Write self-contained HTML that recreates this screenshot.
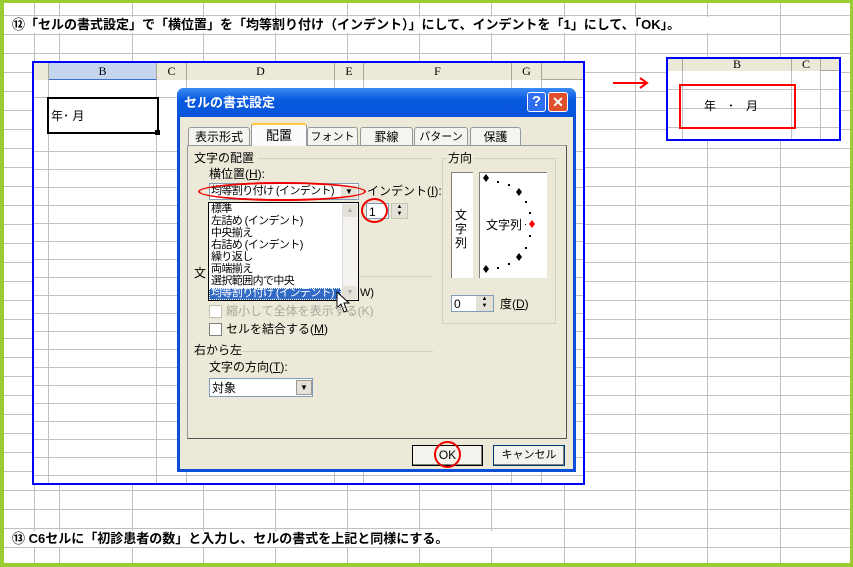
<!DOCTYPE html>
<html><head><meta charset="utf-8"><style>
*{margin:0;padding:0;box-sizing:border-box}
body{width:853px;height:567px;overflow:hidden;background:#fff;font-family:"Liberation Sans","Noto Sans CJK JP",sans-serif;position:relative}
.a{position:absolute}
.t{font-size:12px;line-height:14px;color:#000;white-space:nowrap}
.hdr{background:#ece9d8;border-right:1px solid #aca899;font-size:12px;text-align:center;line-height:17px;font-family:"Liberation Serif","Noto Sans CJK JP",serif}
.tab{background:#f5f4ee;border:1px solid #919b9c;border-bottom:none;font-size:12px;text-align:center;line-height:18px;border-radius:3px 3px 0 0}
.sunk{background:#fff;border:1px solid #7f9db9}
.btn{background:#f3f2ec;border:1px solid #000;box-shadow:inset -1px -1px #808080;font-size:12px;text-align:center;line-height:18px}
.cb{width:13px;height:13px;border:1px solid #808080;background:#fff}
.n{font-size:11px;letter-spacing:-0.6px}
</style></head><body>
<svg class="a" style="left:0;top:0" width="853" height="567">
<g stroke="#c0c0c0" stroke-width="1">
<line x1="34.5" y1="0" x2="34.5" y2="567"/><line x1="59.5" y1="0" x2="59.5" y2="567"/>
<line x1="132.5" y1="0" x2="132.5" y2="567"/><line x1="203.5" y1="0" x2="203.5" y2="567"/>
<line x1="275.5" y1="0" x2="275.5" y2="567"/><line x1="347.5" y1="0" x2="347.5" y2="567"/>
<line x1="419.5" y1="0" x2="419.5" y2="567"/><line x1="491.5" y1="0" x2="491.5" y2="567"/>
<line x1="564.5" y1="0" x2="564.5" y2="567"/><line x1="635.5" y1="0" x2="635.5" y2="567"/>
<line x1="707.5" y1="0" x2="707.5" y2="567"/><line x1="780.5" y1="0" x2="780.5" y2="567"/>
<line x1="0" y1="15.5" x2="853" y2="15.5"/><line x1="0" y1="34.5" x2="853" y2="34.5"/>
<line x1="0" y1="53.5" x2="853" y2="53.5"/><line x1="0" y1="72.5" x2="853" y2="72.5"/>
<line x1="0" y1="91.5" x2="853" y2="91.5"/><line x1="0" y1="110.5" x2="853" y2="110.5"/>
<line x1="0" y1="129.5" x2="853" y2="129.5"/><line x1="0" y1="148.5" x2="853" y2="148.5"/>
<line x1="0" y1="167.5" x2="853" y2="167.5"/><line x1="0" y1="186.5" x2="853" y2="186.5"/>
<line x1="0" y1="205.5" x2="853" y2="205.5"/><line x1="0" y1="224.5" x2="853" y2="224.5"/>
<line x1="0" y1="243.5" x2="853" y2="243.5"/><line x1="0" y1="262.5" x2="853" y2="262.5"/>
<line x1="0" y1="281.5" x2="853" y2="281.5"/><line x1="0" y1="300.5" x2="853" y2="300.5"/>
<line x1="0" y1="319.5" x2="853" y2="319.5"/><line x1="0" y1="338.5" x2="853" y2="338.5"/>
<line x1="0" y1="357.5" x2="853" y2="357.5"/><line x1="0" y1="376.5" x2="853" y2="376.5"/>
<line x1="0" y1="395.5" x2="853" y2="395.5"/><line x1="0" y1="414.5" x2="853" y2="414.5"/>
<line x1="0" y1="433.5" x2="853" y2="433.5"/><line x1="0" y1="452.5" x2="853" y2="452.5"/>
<line x1="0" y1="471.5" x2="853" y2="471.5"/><line x1="0" y1="490.5" x2="853" y2="490.5"/>
<line x1="0" y1="509.5" x2="853" y2="509.5"/><line x1="0" y1="528.5" x2="853" y2="528.5"/>
<line x1="0" y1="547.5" x2="853" y2="547.5"/>
</g></svg>
<div class="a t" style="left:12px;top:17px;font-size:13px;font-weight:bold;background:#fff;width:720px;height:16px;line-height:16px">⑫「セルの書式設定」で「横位置」を「均等割り付け（インデント）」にして、インデントを「1」にして、「OK」。</div>
<div class="a t" style="left:12px;top:531px;font-size:13px;font-weight:bold;background:#fff;width:490px;height:16px;line-height:16px">⑬ C6セルに「初診患者の数」と入力し、セルの書式を上記と同様にする。</div>
<div class="a" style="left:32px;top:61px;width:553px;height:424px;border:2px solid #0000ff;background:#fff;overflow:hidden">
<svg class="a" style="left:0;top:0" width="553" height="424"><g stroke="#c0c0c0">
<line x1="14.5" y1="0" x2="14.5" y2="424"/><line x1="122.5" y1="0" x2="122.5" y2="424"/><line x1="152.5" y1="0" x2="152.5" y2="424"/><line x1="300.5" y1="0" x2="300.5" y2="424"/><line x1="329.5" y1="0" x2="329.5" y2="424"/><line x1="477.5" y1="0" x2="477.5" y2="424"/><line x1="507.5" y1="0" x2="507.5" y2="424"/>
<line x1="0" y1="34.5" x2="553" y2="34.5"/><line x1="0" y1="88.5" x2="553" y2="88.5"/><line x1="0" y1="106.5" x2="553" y2="106.5"/><line x1="0" y1="124.5" x2="553" y2="124.5"/><line x1="0" y1="142.5" x2="553" y2="142.5"/><line x1="0" y1="160.5" x2="553" y2="160.5"/><line x1="0" y1="178.5" x2="553" y2="178.5"/><line x1="0" y1="196.5" x2="553" y2="196.5"/><line x1="0" y1="214.5" x2="553" y2="214.5"/><line x1="0" y1="232.5" x2="553" y2="232.5"/><line x1="0" y1="250.5" x2="553" y2="250.5"/><line x1="0" y1="268.5" x2="553" y2="268.5"/><line x1="0" y1="286.5" x2="553" y2="286.5"/><line x1="0" y1="304.5" x2="553" y2="304.5"/><line x1="0" y1="322.5" x2="553" y2="322.5"/><line x1="0" y1="340.5" x2="553" y2="340.5"/><line x1="0" y1="358.5" x2="553" y2="358.5"/><line x1="0" y1="376.5" x2="553" y2="376.5"/><line x1="0" y1="394.5" x2="553" y2="394.5"/><line x1="0" y1="412.5" x2="553" y2="412.5"/>
</g></svg>
<div class="a" style="left:0;top:0;width:553px;height:17px;background:#ece9d8;border-bottom:1px solid #aca899"></div>
<div class="a hdr" style="left:0;top:0;width:15px;height:17px"></div>
<div class="a hdr" style="left:15px;top:0;width:108px;height:17px;background:#c5d5ee;border-bottom:1px solid #3d6fc7">B</div>
<div class="a hdr" style="left:123px;top:0;width:30px;height:17px">C</div>
<div class="a hdr" style="left:153px;top:0;width:148px;height:17px">D</div>
<div class="a hdr" style="left:301px;top:0;width:29px;height:17px">E</div>
<div class="a hdr" style="left:330px;top:0;width:148px;height:17px">F</div>
<div class="a hdr" style="left:478px;top:0;width:30px;height:17px">G</div>
<div class="a" style="left:13px;top:34px;width:112px;height:37px;border:2px solid #000;background:#fff"></div>
<div class="a" style="left:121px;top:67px;width:5px;height:5px;background:#000"></div>
<div class="a t" style="left:17px;top:46px">年･ 月</div>
</div>
<div class="a" style="left:177px;top:88px;width:399px;height:384px;background:#0a4fd8;border-radius:7px 7px 0 0"></div>
<div class="a" style="left:180px;top:116px;width:393px;height:353px;background:#ece9d8"></div>
<div class="a" style="left:177px;top:88px;width:399px;height:29px;border-radius:7px 7px 0 0;background:linear-gradient(#3c8cf4,#0a5ae0 40%,#0554d8)"></div>
<div class="a t" style="left:184px;top:96px;color:#fff;font-weight:bold;font-size:13px">セルの書式設定</div>
<div class="a" style="left:527px;top:92px;width:19px;height:20px;background:#2f6ef0;border:1px solid #fff;border-radius:3px;color:#fff;font-weight:bold;text-align:center;font-size:15px;line-height:18px">?</div>
<div class="a" style="left:548px;top:92px;width:20px;height:20px;background:#e0502c;border:1px solid #fff;border-radius:3px;color:#fff;font-weight:bold;text-align:center;font-size:14px;line-height:18px">✕</div>
<div class="a tab" style="left:188px;top:127px;width:62px;height:19px">表示形式</div>
<div class="a tab" style="left:307px;top:127px;width:51px;height:19px;font-size:11px">フォント</div>
<div class="a tab" style="left:360px;top:127px;width:53px;height:19px">罫線</div>
<div class="a tab" style="left:414px;top:127px;width:54px;height:19px;font-size:11px">パターン</div>
<div class="a tab" style="left:470px;top:127px;width:51px;height:19px">保護</div>
<div class="a" style="left:187px;top:145px;width:380px;height:294px;background:#fcfcfe;border:1px solid #919b9c;border-right-color:#555;border-bottom-color:#555"></div>
<div class="a tab" style="left:251px;top:123px;width:56px;height:24px;background:#fcfcfe;border-top:2px solid #ffc83c;line-height:22px;font-size:13px">配置</div>
<div class="a" style="left:188px;top:146px;width:378px;height:292px;background:#ece9d8"></div>
<div class="a t" style="left:194px;top:151px;font-size:12px">文字の配置</div>
<div class="a" style="left:258px;top:158px;width:175px;height:1px;background:#d0d0bf"></div>
<div class="a t" style="left:209px;top:167px">横位置(<u>H</u>):</div>
<div class="a sunk" style="left:209px;top:183px;width:150px;height:17px"></div>
<div class="a t n" style="left:211px;top:184px">均等割り付け (インデント)</div>
<div class="a" style="left:341px;top:185px;width:16px;height:14px;background:#e4e2d6;font-size:8px;text-align:center;line-height:14px">▼</div>
<div class="a" style="left:198px;top:182px;width:168px;height:19px;border:2px solid #e00;border-radius:50%"></div>
<div class="a t" style="left:367px;top:184px">インデント(<u>I</u>):</div>
<div class="a sunk" style="left:366px;top:203px;width:23px;height:16px"></div>
<div class="a t" style="left:369px;top:205px">1</div>
<div class="a" style="left:391px;top:203px;width:17px;height:16px;background:#e4e2d6;border:1px solid #c8c6b8;font-size:6px;text-align:center;line-height:7px">▲<br>▼</div>
<div class="a" style="left:361px;top:198px;width:27px;height:25px;border:2px solid #e00;border-radius:50%"></div>
<div class="a" style="left:208px;top:202px;width:151px;height:99px;background:#fff;border:1px solid #000"></div>
<div class="a" style="left:342px;top:203px;width:16px;height:97px;background:#f3f2ee;border-left:1px solid #ddd"></div>
<div class="a" style="left:343px;top:204px;width:14px;height:13px;background:#e4e2d6;font-size:7px;text-align:center;color:#aaa;line-height:13px">▲</div>
<div class="a" style="left:343px;top:286px;width:14px;height:13px;background:#e4e2d6;font-size:7px;text-align:center;color:#aaa;line-height:13px">▼</div>
<div class="a" style="left:209px;top:288px;width:132px;height:12px;background:#316ac5;border:1px dotted #fff"></div>
<div class="a t n" style="left:211px;top:203px;line-height:12px">標準<br>左詰め (インデント)<br>中央揃え<br>右詰め (インデント)<br>繰り返し<br>両端揃え<br>選択範囲内で中央<br><span style="color:#fff">均等割り付け (インデント)</span></div>
<div class="a t" style="left:194px;top:266px">文</div>
<div class="a" style="left:359px;top:276px;width:74px;height:1px;background:#d0d0bf"></div>
<div class="a t" style="left:360px;top:286px;font-size:11px">W)</div>
<svg class="a" style="left:336px;top:291px" width="16" height="24"><path d="M1 1 L1 17 L5 13 L8 21 L11 20 L8 12 L13 12 Z" fill="#fff" stroke="#000"/></svg>
<div class="a cb" style="left:209px;top:305px;border-color:#c0c0b0"></div>
<div class="a t" style="left:226px;top:304px;color:#a8a89c">縮小して全体を表示する(K)</div>
<div class="a cb" style="left:209px;top:323px"></div>
<div class="a t" style="left:226px;top:322px">セルを結合する(<u>M</u>)</div>
<div class="a t" style="left:194px;top:343px">右から左</div>
<div class="a" style="left:241px;top:351px;width:192px;height:1px;background:#d0d0bf"></div>
<div class="a t" style="left:209px;top:360px">文字の方向(<u>T</u>):</div>
<div class="a sunk" style="left:209px;top:378px;width:104px;height:19px"></div>
<div class="a t" style="left:212px;top:381px">対象</div>
<div class="a" style="left:296px;top:380px;width:16px;height:15px;background:#e4e2d6;border:1px solid #999;font-size:8px;text-align:center;line-height:14px">▼</div>
<div class="a" style="left:442px;top:158px;width:114px;height:166px;border:1px solid #d0d0bf"></div>
<div class="a t" style="left:446px;top:151px;background:#ece9d8;padding:0 2px">方向</div>
<div class="a" style="left:451px;top:172px;width:22px;height:106px;background:#fff;border-left:1px solid #808080;border-top:1px solid #808080"></div>
<div class="a t" style="left:455px;top:208px;line-height:14px">文<br>字<br>列</div>
<div class="a" style="left:479px;top:172px;width:68px;height:106px;background:#fff;border-left:1px solid #808080;border-top:1px solid #808080"></div>
<svg class="a" style="left:479px;top:172px" width="68" height="106">
<g fill="#000"><path d="M7 2l3 4-3 4-3-4z"/><path d="M40 16l3 4-3 4-3-4z"/><path d="M40 81l3 4-3 4-3-4z"/><path d="M7 93l3 4-3 4-3-4z"/>
<rect x="18" y="9" width="2" height="2"/><rect x="29" y="12" width="2" height="2"/><rect x="46" y="29" width="2" height="2"/><rect x="50" y="40" width="2" height="2"/><rect x="50" y="63" width="2" height="2"/><rect x="46" y="75" width="2" height="2"/><rect x="29" y="91" width="2" height="2"/><rect x="18" y="95" width="2" height="2"/><rect x="46" y="52" width="1" height="1"/></g>
<path d="M53 48l3 4-3 4-3-4z" fill="#e00"/></svg>
<div class="a t" style="left:486px;top:218px">文字列</div>
<div class="a sunk" style="left:451px;top:295px;width:43px;height:17px;border-color:#7f9db9"></div>
<div class="a t" style="left:454px;top:297px">0</div>
<div class="a" style="left:476px;top:296px;width:17px;height:15px;background:#e4e2d6;font-size:6px;text-align:center;line-height:7px">▲<br>▼</div>
<div class="a t" style="left:500px;top:297px">度(<u>D</u>)</div>
<div class="a btn" style="left:412px;top:445px;width:71px;height:21px">OK</div>
<div class="a btn" style="left:493px;top:445px;width:72px;height:21px;border-color:#003c74;font-size:11px">キャンセル</div>
<div class="a" style="left:434px;top:441px;width:27px;height:27px;border:2px solid #e00;border-radius:50%"></div>
<svg class="a" style="left:610px;top:76px" width="40" height="14"><path d="M3 7H36M30 2L37 7L30 12" stroke="#f00" stroke-width="2" fill="none"/></svg>
<div class="a" style="left:666px;top:57px;width:175px;height:84px;border:2px solid #0000ff;background:#fff;overflow:hidden">
<svg class="a" style="left:0;top:0" width="175" height="84"><g stroke="#c0c0c0">
<line x1="14.5" y1="0" x2="14.5" y2="84"/><line x1="123.5" y1="0" x2="123.5" y2="84"/><line x1="152.5" y1="0" x2="152.5" y2="84"/>
<line x1="0" y1="30.5" x2="175" y2="30.5"/><line x1="0" y1="49.5" x2="175" y2="49.5"/><line x1="0" y1="68.5" x2="175" y2="68.5"/></g></svg>
<div class="a" style="left:0;top:0;width:175px;height:12px;background:#ece9d8;border-bottom:1px solid #aca899"></div>
<div class="a hdr" style="left:0;top:0;width:15px;height:12px"></div>
<div class="a hdr" style="left:15px;top:0;width:109px;height:12px;line-height:10px">B</div>
<div class="a hdr" style="left:124px;top:0;width:29px;height:12px;line-height:10px">C</div>
</div>
<div class="a" style="left:679px;top:84px;width:117px;height:45px;border:2px solid #f00"></div>
<div class="a t" style="left:704px;top:99px">年　･　月</div>
<div class="a" style="left:0;top:0;width:853px;height:567px;border:3px solid #9acd32;border-left-width:4px;border-bottom-width:4px"></div>
</body></html>
